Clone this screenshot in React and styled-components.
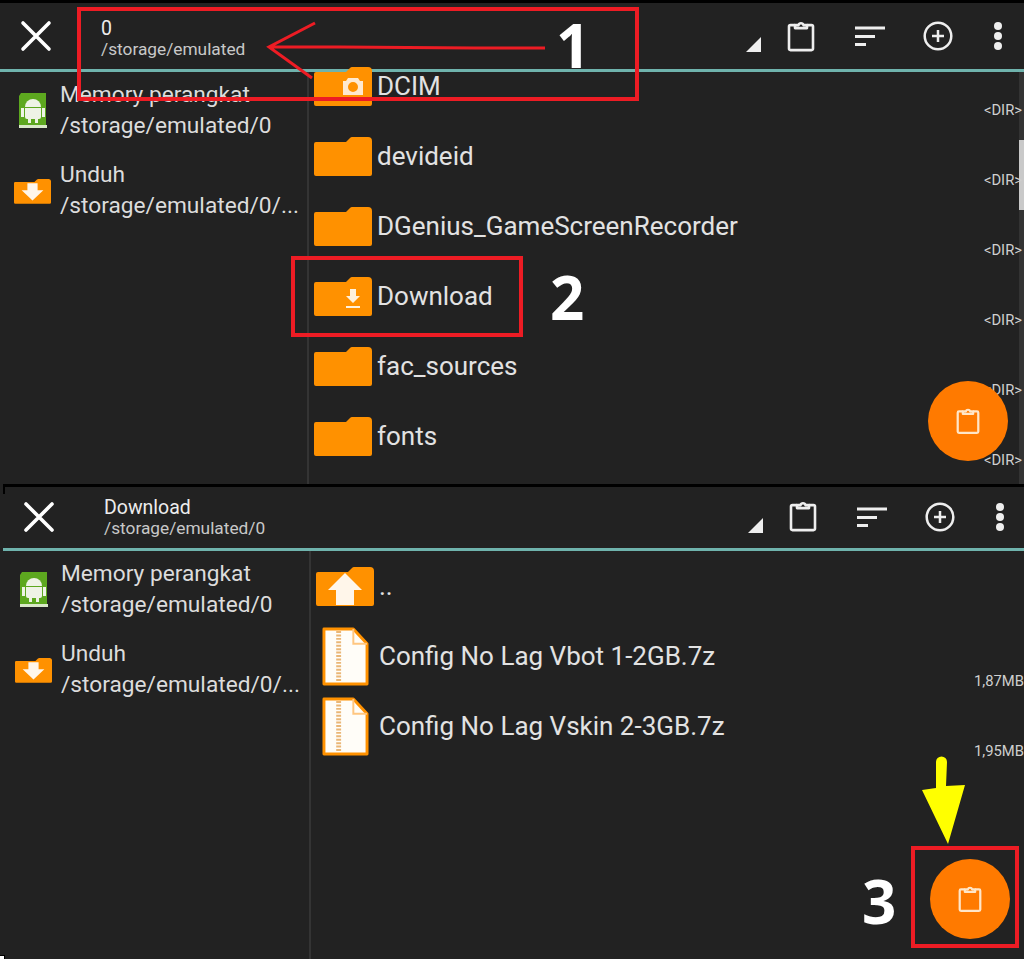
import React from "react";
import styled, { createGlobalStyle } from "styled-components";

const GlobalStyle = createGlobalStyle`
  html, body {
    margin: 0;
    padding: 0;
    background: #222222;
  }
`;

const Clipboard = ({ size = 28 }) => (
  <svg width={size} height={size * 1.15} viewBox="0 0 28 32" fill="none" stroke="currentColor" strokeWidth="2.6" strokeLinejoin="round">
    <path d="M8 5H3.500A1.500 1.500 0 0 0 2 6.500v22A1.500 1.500 0 0 0 3.500 30h21a1.500 1.500 0 0 0 1.500-1.500v-22A1.500 1.500 0 0 0 24.500 5H20" />
    <path d="M8 8V5h3.500a2.600 2.600 0 0 1 5 0H20v3z" />
  </svg>
);

const Close = () => (
  <svg width="32" height="32" viewBox="0 0 32 32" stroke="#fff" strokeWidth="3.6" strokeLinecap="round">
    <path d="M3 3l26 26M29 3L3 29" />
  </svg>
);

const Sort = () => (
  <svg width="30" height="20" viewBox="0 0 30 20" stroke="#eee" strokeWidth="2.800">
    <path d="M0 2h30M0 10.500h20M0 18.500h11" />
  </svg>
);

const AddCircle = () => (
  <svg width="30" height="30" viewBox="0 0 30 30" fill="none" stroke="#eee" strokeWidth="2.500">
    <circle cx="15" cy="15" r="13.300" />
    <path d="M15 9v12M9 15h12" />
  </svg>
);

const More = () => (
  <svg width="10" height="30" viewBox="0 0 10 30" fill="#eee">
    <circle cx="5" cy="5" r="4" />
    <circle cx="5" cy="15" r="4" />
    <circle cx="5" cy="25" r="4" />
  </svg>
);

const Corner = () => (
  <svg width="15" height="15" viewBox="0 0 15 15" fill="#eee">
    <path d="M15 0v15H0z" />
  </svg>
);

const AndroidBook = () => (
  <svg width="30" height="36" viewBox="0 0 30 36">
    <path d="M3 0h25v32H1V3z" fill="#5da81f" />
    <path d="M1 32h28v3H1z" fill="#d9e8c8" />
    <path d="M7 14a8 8 0 0 1 16 0z" fill="#eef3e6" />
    <path d="M7 15h16v9a2 2 0 0 1-2 2H9a2 2 0 0 1-2-2z" fill="#eef3e6" />
    <path d="M3 15h3v9H3zM24 15h3v9h-3zM10 26h3v4h-3zM17 26h3v4h-3z" fill="#eef3e6" />
  </svg>
);

const Folder = ({ kind, small }) => (
  <svg width={small ? 37 : 58} height={small ? 26 : 40} viewBox="0 0 58 40">
    <path d="M0 8a2 2 0 0 1 2-2h30l4-4a3 3 0 0 1 2-1h16a4 4 0 0 1 4 4v33a2 2 0 0 1-2 2H2a2 2 0 0 1-2-2z" fill="#ff9100" />
    {kind === "camera" && (
      <path d="M32 15l2-3h10l2 3h3v14H29V15zM39 16a5 5 0 1 0 0 10 5 5 0 0 0 0-10z" fill="#ffe9cf" fillRule="evenodd" />
    )}
    {kind === "download" && <path d="M36 13h6v7h4l-7 7-7-7h4zM32 30h14v2H32z" fill="#fff1dd" />}
    {kind === "unduh" && <path d="M21 8h16v11h9L29 35 12 19h9z" fill="#fff6ea" />}
    {kind === "up" && <path d="M29 7l17 17h-8v15H20V24h-8z" fill="#fff6ea" />}
  </svg>
);

const ZipFile = () => (
  <svg width="47" height="59" viewBox="0 0 48 60">
    <path d="M2 2h30l14 15v41H2z" fill="#fffdf8" stroke="#ff9100" strokeWidth="3" strokeLinejoin="round" />
    <path d="M32 2v15h14" fill="none" stroke="#ffc680" strokeWidth="2" />
    <path d="M17 4v52" stroke="#eab676" strokeWidth="5" strokeDasharray="2 1.500" />
  </svg>
);

const Page = styled.div`
  position: relative;
  width: 1024px;
  height: 959px;
  overflow: hidden;
  display: flex;
  flex-direction: column;
  box-sizing: border-box;
  border-top: 3px solid #000;
  background: #222222;
  font-family: Roboto, "Liberation Sans", sans-serif;
  color: #e4e4e4;
`;

const Panel = styled.section`
  position: relative;
  box-sizing: border-box;
  height: ${(p) => p.$height}px;
  margin-left: ${(p) => p.$inset}px;
  border-top: ${(p) => (p.$divided ? "3px solid #000" : "none")};
  display: flex;
  flex-direction: column;
  overflow: hidden;
`;

const Tick = styled.div`
  position: absolute;
  left: 0;
  top: 0;
  width: 2px;
  height: 7px;
  background: #000;
`;

const Notch = styled.div`
  position: absolute;
  left: 0;
  bottom: 0;
  width: 4px;
  height: 3px;
  background: #fff;
  border-top: 1px solid #000;
  border-right: 1px solid #000;
`;

const Toolbar = styled.header`
  height: ${(p) => p.$height}px;
  padding-bottom: ${(p) => p.$lift}px;
  flex: none;
  display: flex;
  align-items: center;
  border-bottom: 3px solid #6fb3ad;
`;

const CloseButton = styled.div`
  width: 101px;
  flex: none;
  display: flex;
  padding-left: 20px;
  box-sizing: border-box;
`;

const TitleBlock = styled.div`
  flex: 1;
  line-height: 20px;
  padding-top: ${(p) => p.$shift}px;
`;

const Title = styled.div`
  font-size: 19.500px;
  color: #ededed;
`;

const Subtitle = styled.div`
  font-size: 17.300px;
  color: #c8c8c8;
`;

const Actions = styled.div`
  display: flex;
  align-items: center;
  margin-right: ${(p) => p.$nudge}px;
  color: #eee;
`;

const CornerSlot = styled.div`
  align-self: flex-end;
  margin-right: 5px;
  line-height: 0;
`;

const ActionSlot = styled.div`
  width: ${(p) => p.$width}px;
  display: flex;
  justify-content: center;
  line-height: 0;
`;

const Body = styled.div`
  flex: 1;
  min-height: 0;
  display: flex;
  margin-left: ${(p) => p.$shift}px;
`;

const Sidebar = styled.aside`
  width: ${(p) => p.$width}px;
  flex: none;
  box-sizing: border-box;
  border-right: 2px solid #343434;
`;

const Place = styled.div`
  height: 75px;
  margin-bottom: 5px;
  display: flex;
  align-items: center;
`;

const PlaceIcon = styled.div`
  width: 60px;
  flex: none;
  padding-left: ${(p) => p.$pad}px;
  padding-top: 3px;
  box-sizing: border-box;
  line-height: 0;
`;

const PlaceText = styled.div`
  font-size: 22.700px;
  line-height: 31px;
  color: #dcdcdc;
  white-space: nowrap;
`;

const FileList = styled.div`
  flex: 1;
  min-width: 0;
  margin-top: ${(p) => p.$offset}px;
`;

const Row = styled.div`
  height: 70px;
  display: flex;
  align-items: center;
  padding-left: 5px;
  padding-right: ${(p) => p.$pad}px;
`;

const RowIcon = styled.div`
  width: 63px;
  flex: none;
  line-height: 0;
  display: flex;
  justify-content: center;
  padding-right: 5px;
  box-sizing: border-box;
`;

const RowName = styled.div`
  flex: 1;
  font-size: 26px;
  color: #e2e2e2;
  white-space: nowrap;
`;

const RowSize = styled.div`
  position: relative;
  z-index: 1;
  align-self: flex-end;
  font-size: 14.800px;
  line-height: 15px;
  padding-bottom: ${(p) => p.$drop}px;
  color: #cfcfcf;
  white-space: nowrap;
`;

const ScrollTrack = styled.div`
  position: absolute;
  right: 0;
  top: 69px;
  bottom: 0;
  width: 5px;
  background: #333333;
`;

const ScrollThumb = styled.div`
  margin-top: 68px;
  height: 70px;
  background: #c9c9c9;
`;

const Fab = styled.div`
  position: absolute;
  z-index: 2;
  right: ${(p) => p.$right}px;
  top: ${(p) => p.$top}px;
  width: 80px;
  height: 80px;
  border-radius: 50%;
  background: #ff7a00;
  color: #ffe6c8;
  display: flex;
  align-items: center;
  justify-content: center;
`;

const Overlay = styled.svg`
  position: absolute;
  z-index: 3;
  left: 0;
  top: -3px;
  pointer-events: none;
`;

const Step = styled.span`
  position: absolute;
  z-index: 3;
  left: ${(p) => p.$x}px;
  top: ${(p) => p.$y}px;
  font-family: "Open Sans", sans-serif;
  font-weight: 700;
  font-size: 60px;
  line-height: 60px;
  color: #fff;
`;

const places = [
  { icon: <AndroidBook />, pad: 18, name: "Memory perangkat", path: "/storage/emulated/0" },
  { icon: <Folder kind="unduh" small />, pad: 14, name: "Unduh", path: "/storage/emulated/0/..." },
];

const browser = [
  { icon: <Folder kind="camera" />, name: "DCIM", size: "<DIR>" },
  { icon: <Folder />, name: "devideid", size: "<DIR>" },
  { icon: <Folder />, name: "DGenius_GameScreenRecorder", size: "<DIR>" },
  { icon: <Folder kind="download" />, name: "Download", size: "<DIR>" },
  { icon: <Folder />, name: "fac_sources", size: "<DIR>" },
  { icon: <Folder />, name: "fonts", size: "<DIR>" },
];

const downloads = [
  { icon: <Folder kind="up" />, name: "..", size: "" },
  { icon: <ZipFile />, name: "Config No Lag Vbot 1-2GB.7z", size: "1,87MB" },
  { icon: <ZipFile />, name: "Config No Lag Vskin 2-3GB.7z", size: "1,95MB" },
];

const FilePanel = ({ height, inset, divided, bar, title, subtitle, body, files, fab, scroll }) => (
  <Panel $height={height} $inset={inset} $divided={divided}>
    {divided && <Tick />}
    <Toolbar $height={bar.height} $lift={bar.lift}>
      <CloseButton><Close /></CloseButton>
      <TitleBlock $shift={bar.titleShift}>
        <Title>{title}</Title>
        <Subtitle>{subtitle}</Subtitle>
      </TitleBlock>
      <Actions $nudge={bar.nudge}>
        <CornerSlot><Corner /></CornerSlot>
        <ActionSlot $width={70}><Clipboard /></ActionSlot>
        <ActionSlot $width={68}><Sort /></ActionSlot>
        <ActionSlot $width={68}><AddCircle /></ActionSlot>
        <ActionSlot $width={52}><More /></ActionSlot>
      </Actions>
    </Toolbar>
    <Body $shift={body.shift}>
      <Sidebar $width={body.sidebar}>
        {places.map((p) => (
          <Place key={p.name}>
            <PlaceIcon $pad={p.pad}>{p.icon}</PlaceIcon>
            <PlaceText>{p.name}<br />{p.path}</PlaceText>
          </Place>
        ))}
      </Sidebar>
      <FileList $offset={body.offset}>
        {files.map((f) => (
          <Row key={f.name} $pad={body.sizePad}>
            <RowIcon>{f.icon}</RowIcon>
            <RowName>{f.name}</RowName>
            <RowSize $drop={body.sizeDrop}>{f.size}</RowSize>
          </Row>
        ))}
      </FileList>
    </Body>
    {scroll && <ScrollTrack><ScrollThumb /></ScrollTrack>}
    <Fab $right={fab.right} $top={fab.top}><Clipboard size={24} /></Fab>
  </Panel>
);

export default function App() {
  return (
    <Page>
      <GlobalStyle />
      <FilePanel
        height={481}
        inset={0}
        bar={{ height: 66, lift: 0, titleShift: 6, nudge: 0 }}
        title="0"
        subtitle="/storage/emulated"
        body={{ shift: 0, sidebar: 309, offset: -21, sizePad: 2, sizeDrop: 3 }}
        files={browser}
        fab={{ right: 16, top: 378 }}
        scroll
      />
      <FilePanel
        height={475}
        inset={3}
        divided
        bar={{ height: 59, lift: 2, titleShift: 2, nudge: -2 }}
        title="Download"
        subtitle="/storage/emulated/0"
        body={{ shift: -2, sidebar: 310, offset: 0, sizePad: 0, sizeDrop: 2 }}
        files={downloads}
        fab={{ right: 14, top: 372 }}
      />
      <Notch />
      <Overlay width="1024" height="959" viewBox="0 0 1024 959" fill="none" stroke="#ed1c24" strokeWidth="4">
        <rect x="79" y="9" width="558" height="90" />
        <rect x="293" y="258" width="228" height="77" />
        <rect x="913" y="848" width="104" height="98" />
        <path d="M545 48H475l-135-1-68 0M315 23l-46 24 43 31" strokeWidth="3" />
        <path d="M936 762a5.500 5.500 0 0 1 11 0l-1 24 19-1-17 59-26-54 14-2z" fill="#ffff00" stroke="none" />
      </Overlay>
      <Step $x={556} $y={12}>1</Step>
      <Step $x={550} $y={264}>2</Step>
      <Step $x={862} $y={868}>3</Step>
    </Page>
  );
}
